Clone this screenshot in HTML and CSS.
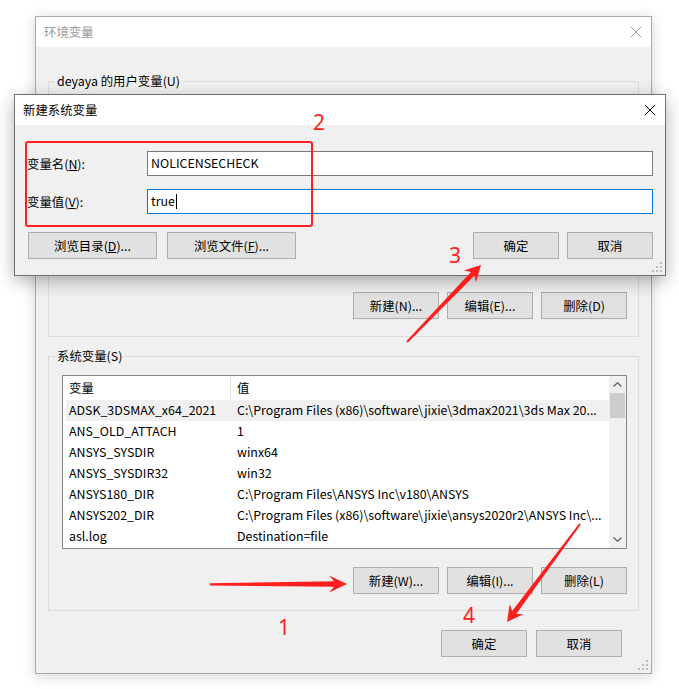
FILE: index.html
```html
<!DOCTYPE html>
<html lang="zh-CN">
<head>
<meta charset="utf-8">
<title>环境变量</title>
<link rel="stylesheet" href="styles.css">
</head>
<body>
<div class="desk">
  <div class="win main">
    <div class="titlebar">
      <span class="title muted">环境变量</span>
      <svg class="close-x" width="12" height="12" viewBox="0 0 12 12"><path d="M1 1L11 11M11 1L1 11" stroke="#9a9a9a" stroke-width="1"/></svg>
    </div>
    <div class="win-body">
      <fieldset class="group user">
        <legend>deyaya 的用户变量(U)</legend>
        <div class="list list-user"></div>
        <div class="btn-row">
          <button class="btn">新建(N)...</button>
          <button class="btn">编辑(E)...</button>
          <button class="btn">删除(D)</button>
        </div>
      </fieldset>
      <fieldset class="group sys">
        <legend>系统变量(S)</legend>
        <div class="list list-sys">
          <div class="lv">
            <div class="lv-head">
              <div class="hcell c1">变量</div>
              <div class="hcell c2">值</div>
            </div>
            <div class="lv-row sel"><span class="c1">ADSK_3DSMAX_x64_2021</span><span class="c2">C:\Program Files (x86)\software\jixie\3dmax2021\3ds Max 20...</span></div>
            <div class="lv-row"><span class="c1">ANS_OLD_ATTACH</span><span class="c2">1</span></div>
            <div class="lv-row"><span class="c1">ANSYS_SYSDIR</span><span class="c2">winx64</span></div>
            <div class="lv-row"><span class="c1">ANSYS_SYSDIR32</span><span class="c2">win32</span></div>
            <div class="lv-row"><span class="c1">ANSYS180_DIR</span><span class="c2">C:\Program Files\ANSYS Inc\v180\ANSYS</span></div>
            <div class="lv-row"><span class="c1">ANSYS202_DIR</span><span class="c2">C:\Program Files (x86)\software\jixie\ansys2020r2\ANSYS Inc\...</span></div>
            <div class="lv-row"><span class="c1">asl.log</span><span class="c2">Destination=file</span></div>
          </div>
          <div class="scrollbar">
            <div class="sb-btn"><svg width="9" height="5" viewBox="0 0 9 5"><path d="M0.5 4.5L4.5 0.8L8.5 4.5" fill="none" stroke="#606060" stroke-width="1.3"/></svg></div>
            <div class="sb-thumb"></div>
            <div class="sb-track"></div>
            <div class="sb-btn"><svg width="9" height="5" viewBox="0 0 9 5"><path d="M0.5 0.5L4.5 4.2L8.5 0.5" fill="none" stroke="#606060" stroke-width="1.3"/></svg></div>
          </div>
        </div>
        <div class="btn-row">
          <button class="btn">新建(W)...</button>
          <button class="btn">编辑(I)...</button>
          <button class="btn">删除(L)</button>
        </div>
      </fieldset>
      <div class="footer">
        <button class="btn">确定</button>
        <button class="btn">取消</button>
      </div>
    </div>
    <svg class="grip" width="10" height="10" viewBox="0 0 10 10"><g fill="#bcbcbc"><rect x="8" y="0" width="2" height="2"/><rect x="4" y="4" width="2" height="2"/><rect x="8" y="4" width="2" height="2"/><rect x="0" y="8" width="2" height="2"/><rect x="4" y="8" width="2" height="2"/><rect x="8" y="8" width="2" height="2"/></g></svg>
  </div>

  <div class="win dialog">
    <div class="titlebar">
      <span class="title">新建系统变量</span>
      <svg class="close-x" width="12" height="12" viewBox="0 0 12 12"><path d="M1 1L11 11M11 1L1 11" stroke="#000" stroke-width="1"/></svg>
    </div>
    <div class="dlg-body">
      <div class="field">
        <label class="lbl">变量名(<u>N</u>):</label>
        <div class="input">NOLICENSECHECK</div>
      </div>
      <div class="field">
        <label class="lbl">变量值(<u>V</u>):</label>
        <div class="input focus">true<span class="caret"></span></div>
      </div>
      <div class="dlg-buttons">
        <div class="left-btns">
          <button class="btn wide">浏览目录(<u>D</u>)...</button>
          <button class="btn wide">浏览文件(<u>F</u>)...</button>
        </div>
        <div class="right-btns">
          <button class="btn">确定</button>
          <button class="btn">取消</button>
        </div>
      </div>
    </div>
    <svg class="grip" width="10" height="10" viewBox="0 0 10 10"><g fill="#bcbcbc"><rect x="8" y="0" width="2" height="2"/><rect x="4" y="4" width="2" height="2"/><rect x="8" y="4" width="2" height="2"/><rect x="0" y="8" width="2" height="2"/><rect x="4" y="8" width="2" height="2"/><rect x="8" y="8" width="2" height="2"/></g></svg>
  </div>

  <div class="mark-box"></div>
  <span class="num n1">1</span>
  <span class="num n2">2</span>
  <span class="num n3">3</span>
  <span class="num n4">4</span>
  <svg class="arrows" width="679" height="689" viewBox="0 0 679 689">
    <g fill="#ff1f1f">
      <polygon points="210,583.2 334,581.3 329,575.5 347,584 329,592.5 334,586.7 210,585.6"/>
      <polygon points="406.3,341.3 470.9,272 463.8,270.6 481,265 476,282.4 474.5,275.4 407.7,342.7"/>
      <polygon points="579.2,523.4 512.2,610.9 509.7,604.1 507,622 523.4,614.2 516.2,613.9 580.8,524.6"/>
    </g>
  </svg>
</div>
</body>
</html>
```

FILE: styles.css
```css
* { box-sizing: border-box; }
html, body { margin: 0; padding: 0; }
body {
  background: #ffffff;
  font-family: "Noto Sans CJK SC", "Noto Sans", sans-serif;
  font-size: 12.4px;
  color: #000;
}
.desk {
  position: relative;
  width: 679px;
  height: 689px;
  overflow: hidden;
  padding: 16px 0 0 35px;
}
.win {
  background: #f0f0f0;
  display: flex;
  flex-direction: column;
}
.main {
  position: relative;
  width: 617px;
  height: 658px;
  border: 1px solid #aaaaaa;
  box-shadow: 0 2px 12px rgba(0, 0, 0, 0.18);
}
.titlebar {
  height: 30px;
  background: #ffffff;
  display: flex;
  align-items: center;
  justify-content: space-between;
  padding: 0 8px 0 8px;
  flex: none;
}
.title { font-size: 12.4px; line-height: 16px; }
.title.muted { color: #999999; }
.close-x { display: block; }
.main .close-x { margin-right: 1px; }
.win-body {
  padding: 0 12px;
  display: flex;
  flex-direction: column;
}
.group {
  margin: 0;
  border: 1px solid #dcdcdc;
  padding: 0 11px 17px 13px;
  min-width: 0;
}
.group legend {
  margin-left: -7px;
  padding: 0 2px;
  font-size: 12.4px;
  line-height: 16px;
}
.group.user { margin-top: 26px; }
.group.sys { margin-top: 11px; padding-bottom: 16px; }
.list {
  border: 1px solid #828790;
  background: #ffffff;
}
.list-user {
  margin-top: 11px;
  height: 172px;
}
.list-sys {
  margin-top: 11px;
  height: 174px;
  display: flex;
}
.lv { flex: 1; min-width: 0; }
.lv-head {
  height: 24px;
  display: grid;
  grid-template-columns: 168px 1fr;
  align-items: stretch;
}
.hcell {
  padding-left: 6px;
  display: flex;
  align-items: center;
}
.hcell.c1 { border-right: 1px solid #e5e5e5; }
.lv-row {
  height: 21px;
  margin-left: 3px;
  display: grid;
  grid-template-columns: 165px 1fr;
  align-items: center;
  white-space: nowrap;
  line-height: 16px;
  padding-bottom: 1px;
}
.lv-row.sel { background: #f0f0f0; }
.lv-row .c1 { padding-left: 3px; overflow: hidden; }
.lv-row .c2 { padding-left: 6px; overflow: hidden; }
.scrollbar {
  width: 17px;
  flex: none;
  background: #f0f0f0;
  display: flex;
  flex-direction: column;
}
.sb-btn {
  height: 17px;
  display: flex;
  align-items: center;
  justify-content: center;
}
.sb-btn svg { display: block; }
.sb-thumb {
  height: 25px;
  margin: 0 1px;
  background: #cdcdcd;
}
.sb-track { flex: 1; }
.btn-row {
  display: flex;
  justify-content: flex-end;
  gap: 8px;
  margin-top: 20px;
}
.sys .btn-row { margin-top: 18px; }
.btn {
  width: 86px;
  height: 27px;
  padding: 0;
  margin: 0;
  border: 1px solid #adadad;
  background: #e1e1e1;
  font-family: inherit;
  font-size: 12.4px;
  color: #000;
  line-height: 16px;
}
.btn u { text-decoration: underline; }
.footer {
  margin-top: 19px;
  padding-right: 17px;
  display: flex;
  justify-content: flex-end;
  gap: 9px;
}
.grip {
  position: absolute;
  right: 3px;
  bottom: 3px;
}

.dialog {
  position: absolute;
  left: 14px;
  top: 94px;
  width: 652px;
  height: 182px;
  border: 1px solid #707070;
  box-shadow: 0 5px 16px rgba(0, 0, 0, 0.3);
}
.dialog .close-x { margin-right: 1px; }
.dlg-body {
  padding: 26px 12px 0 12px;
  display: flex;
  flex-direction: column;
  gap: 13px;
}
.field {
  display: grid;
  grid-template-columns: 120px 1fr;
  align-items: center;
}
.lbl { line-height: 16px; }
.input {
  height: 25px;
  border: 1px solid #7a7a7a;
  background: #fff;
  padding: 0 3px 1px;
  display: flex;
  align-items: center;
  line-height: 16px;
}
.input.focus { border-color: #0078d7; }
.caret {
  display: inline-block;
  width: 1px;
  height: 15px;
  background: #000;
  margin-left: 1px;
}
.dlg-buttons {
  margin-top: 5px;
  display: flex;
  justify-content: space-between;
  padding-left: 1px;
}
.left-btns, .right-btns { display: flex; }
.left-btns { gap: 10px; }
.right-btns { gap: 8px; }
.btn.wide { width: 129px; }

.mark-box {
  position: absolute;
  left: 25px;
  top: 141px;
  width: 288px;
  height: 86px;
  border: 2px solid #ff1f1f;
  border-radius: 3px;
}
.num {
  position: absolute;
  font-family: "Noto Sans", sans-serif;
  font-size: 21px;
  line-height: 21px;
  color: #ff1f1f;
}
.n1 { left: 278px; top: 617px; }
.n2 { left: 313px; top: 112px; }
.n3 { left: 449px; top: 245px; }
.n4 { left: 463px; top: 605px; }
.arrows {
  position: absolute;
  left: 0;
  top: 0;
  pointer-events: none;
}
```
